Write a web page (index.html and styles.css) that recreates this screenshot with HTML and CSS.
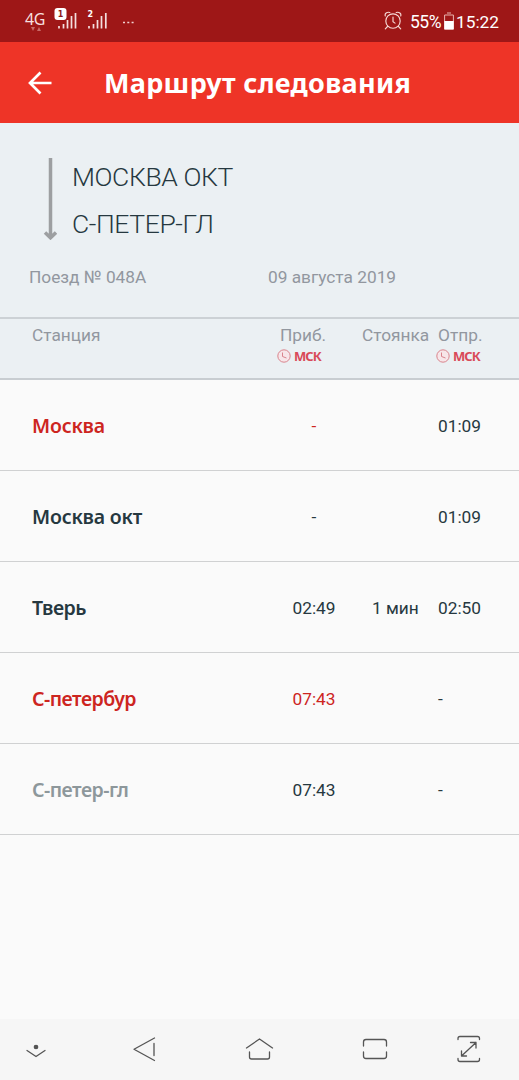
FILE: index.html
```html
<!DOCTYPE html>
<html lang="ru">
<head>
<meta charset="utf-8">
<title>Маршрут следования</title>
<link rel="stylesheet" href="styles.css">
</head>
<body>
<div class="screen">
  <div class="status">
    <div class="network"><span>4G</span><svg class="data" viewBox="0 0 12 5"><path d="M1 0h4L3 4zM7 4h4L9 0z"/></svg></div>
    <svg class="signals" viewBox="0 0 82 24">
      <path d="M4 18v2.500M8.500 16v4.500M12.500 12v8.500M16.500 8v12.500M20.500 5v15.500M34 18v2.500M38.500 16v4.500M42.500 12v8.500M46.500 8v12.500M50.800 5v15.500" stroke="#f4dfdf" stroke-width="1.700"/>
      <rect x="-.5" y="0" width="12" height="12" rx="3" fill="#fff"/>
      <text x="2.700" y="9" class="sim sim-active">1</text>
      <text x="32.500" y="8.500" class="sim">2</text>
      <path d="M68 14.500h2M72.300 14.500h2M76.600 14.500h2" stroke="#f0d0d0" stroke-width="1.500"/>
    </svg>
    <svg class="alarm" viewBox="0 0 18 19"><g fill="none" stroke="#f6d8d5" stroke-width="1.150" stroke-linecap="round"><circle cx="9" cy="10" r="7.200"/><path d="M1.300 5C.4 2.800 3 .5 5.800 1.500M16.700 5c.9-2.200-1.700-4.500-4.500-3.500M3.500 15.500 1.300 17.800M14.500 15.500l2.200 2.300M9 6v4.600l2 1.500"/></g></svg>
    <span class="percent">55%</span>
    <svg class="battery" viewBox="0 0 10 18"><path d="M3 1h4M.6 3h8.800v14H.6z" fill="none" stroke="#e9b5b0"/><path d="M.3 9h9.400v8.500H.3z" fill="#fff"/></svg>
    <span class="clock">15:22</span>
  </div>
  <header class="appbar">
    <svg class="back" viewBox="0 0 24 24"><path d="M23.500 12H2M12.500 1.500 2 12l10.500 10.500" fill="none" stroke="#fff" stroke-width="2.700"/></svg>
    <h1 class="title">Маршрут следования</h1>
  </header>
  <section class="route">
    <div class="direction">
      <svg class="arrow" viewBox="0 0 14 83"><path d="M7.500 1v78M2 75.500l5.500 5.300 5.500-5.300" fill="none" stroke="#9d9fa1" stroke-width="3.500"/></svg>
      <div class="places"><div class="place">МОСКВА ОКТ</div><div class="place place-to">С-ПЕТЕР-ГЛ</div></div>
    </div>
    <div class="trip"><span class="train">Поезд № 048А</span><span class="date">09 августа 2019</span></div>
  </section>
  <div class="columns">
    <span class="col-station">Станция</span>
    <div class="col-arrive"><span>Приб.</span><div class="zone"><svg viewBox="0 0 14 14"><circle cx="7" cy="7" r="6.200"/><path d="M5.500 3.500v4l4 1.500"/></svg><b>МСК</b></div></div>
    <span class="col-stop">Стоянка</span>
    <div class="col-depart"><span>Отпр.</span><div class="zone"><svg viewBox="0 0 14 14"><circle cx="7" cy="7" r="6.200"/><path d="M5.500 3.500v4l4 1.500"/></svg><b>МСК</b></div></div>
  </div>
  <main class="stops">
    <div class="stop"><span class="name red">Москва</span><span class="arrive red">-</span><span></span><span class="depart">01:09</span></div>
    <div class="stop"><span class="name">Москва окт</span><span class="arrive">-</span><span></span><span class="depart">01:09</span></div>
    <div class="stop"><span class="name tight">Тверь</span><span class="arrive">02:49</span><span class="wait">1 мин</span><span class="depart">02:50</span></div>
    <div class="stop"><span class="name tight red">С-петербур</span><span class="arrive red">07:43</span><span></span><span class="depart">-</span></div>
    <div class="stop"><span class="name tight grey">С-петер-гл</span><span class="arrive">07:43</span><span></span><span class="depart">-</span></div>
  </main>
  <nav class="nav">
    <svg viewBox="0 0 519 60" fill="none" stroke="#555" stroke-width="1.300" stroke-linecap="round" stroke-linejoin="round">
      <circle cx="36" cy="27" r="1.700" fill="#555"/><path d="m27 30.500 9 6 9-6"/>
      <path d="M154.500 18 134 29.300l20.500 11.200M154 23.500v12"/>
      <path d="m246.500 28 13-9 13 9M249.500 32v5q0 2 2 2h16q2 0 2-2v-5"/>
      <path d="M363.500 26v-4q0-2.500 2.500-2.500h18q2.500 0 2.500 2.500v4M363.500 32v4q0 2.500 2.500 2.500h18q2.500 0 2.500-2.500v-4"/>
      <path d="M458 19.500v-1q0-2 2-2h17.500q2 0 2 2v1M458 38.500v1q0 2 2 2h17.500q2 0 2-2v-1M461.500 36 476 22.500M470.500 22.500h5.500v5.500M461.500 31v5h5"/>
    </svg>
  </nav>
</div>
</body>
</html>
```
FILE: styles.css
```css
* { box-sizing: border-box; }
body { margin: 0; font-family: Roboto, "Noto Sans", sans-serif; background: #fafafa; color: #263840; }
svg { display: block; flex: none; }
.screen { width: 519px; height: 1080px; display: flex; flex-direction: column; overflow: hidden; white-space: nowrap; }
.status { height: 42px; flex: none; background: #9e1717; color: #fff; display: flex; align-items: flex-start; padding: 8px 0 0 25px; }
.network { width: 30px; font: 16px/18px "Noto Sans", sans-serif; letter-spacing: -.3px; color: #f6dfdf; padding-top: 2px; }
.data { width: 12px; height: 5px; margin: -1px 0 0 5px; fill: #c86a68; }
.signals { width: 82px; height: 24px; overflow: visible; }
.sim { font: bold 8px "DejaVu Sans", sans-serif; fill: #fff; }
.sim-active { fill: #8e1818; }
.alarm { width: 18px; height: 19px; margin: 3px 0 0 247px; }
.percent { font-size: 17.5px; line-height: 20px; margin: 4px 0 0 8px; width: 34px; letter-spacing: -.5px; }
.battery { width: 10px; height: 18px; margin-top: 4px; }
.clock { font-size: 17.3px; line-height: 20px; margin: 4px 0 0 2px; }
.appbar { height: 81px; flex: none; background: #ee3427; display: flex; align-items: center; padding-left: 28px; }
.back { width: 24px; height: 24px; }
.title { margin: 0 0 0 52px; font: 700 27px/40px "Noto Sans", sans-serif; color: #fff; letter-spacing: .3px; }
.route { height: 196px; flex: none; background: #ebf0f3; border-bottom: 2px solid #ccd1d5; padding: 34px 0 0 29px; }
.direction { display: flex; padding-left: 14px; }
.arrow { width: 14px; height: 83px; }
.places { margin-left: 15px; }
.place { font-size: 26.5px; line-height: 40px; font-weight: 300; letter-spacing: -.4px; }
.place-to { margin-top: 7px; }
.trip { display: flex; font-size: 17.3px; line-height: 24px; color: #92979f; margin-top: 21px; }
.train { width: 239px; }
.columns { height: 61px; flex: none; background: #ebf0f3; border-bottom: 2px solid #c8cdd1; display: grid; grid-template-columns: 246px 84px 76px 1fr; padding: 5px 0 0 32px; font-size: 17.3px; line-height: 22px; color: #92979f; }
.col-arrive > span { padding-left: 2px; }
.zone { display: flex; align-items: center; gap: 3px; height: 14px; margin-top: 3px; margin-left: -1px; }
.zone svg { width: 14px; height: 14px; fill: #f7e6e9; stroke: #d9848d; stroke-width: 1; }
.zone b { font: 700 13px/14px "Noto Sans", sans-serif; letter-spacing: -.9px; color: #d94a58; }
.col-depart .zone { margin-left: -2px; }
.stop { height: 91px; border-bottom: 1px solid #d0d1d2; display: grid; grid-template-columns: 240px 84px 82px 1fr; align-items: center; padding: 2px 0 0 32px; font-size: 17.3px; }
.stop .arrive { text-align: center; }
.stop .wait { padding-left: 16px; }
.name { font: 600 19.5px/28px "Noto Sans", sans-serif; letter-spacing: -.2px; }
.tight { letter-spacing: -.5px; }
.stop .red { color: #cd251f; }
.grey { color: #8d979b; }
.nav { height: 61px; margin-top: auto; background: #f6f6f6; }
.nav svg { width: 519px; height: 60px; margin-top: 1px; }
```
